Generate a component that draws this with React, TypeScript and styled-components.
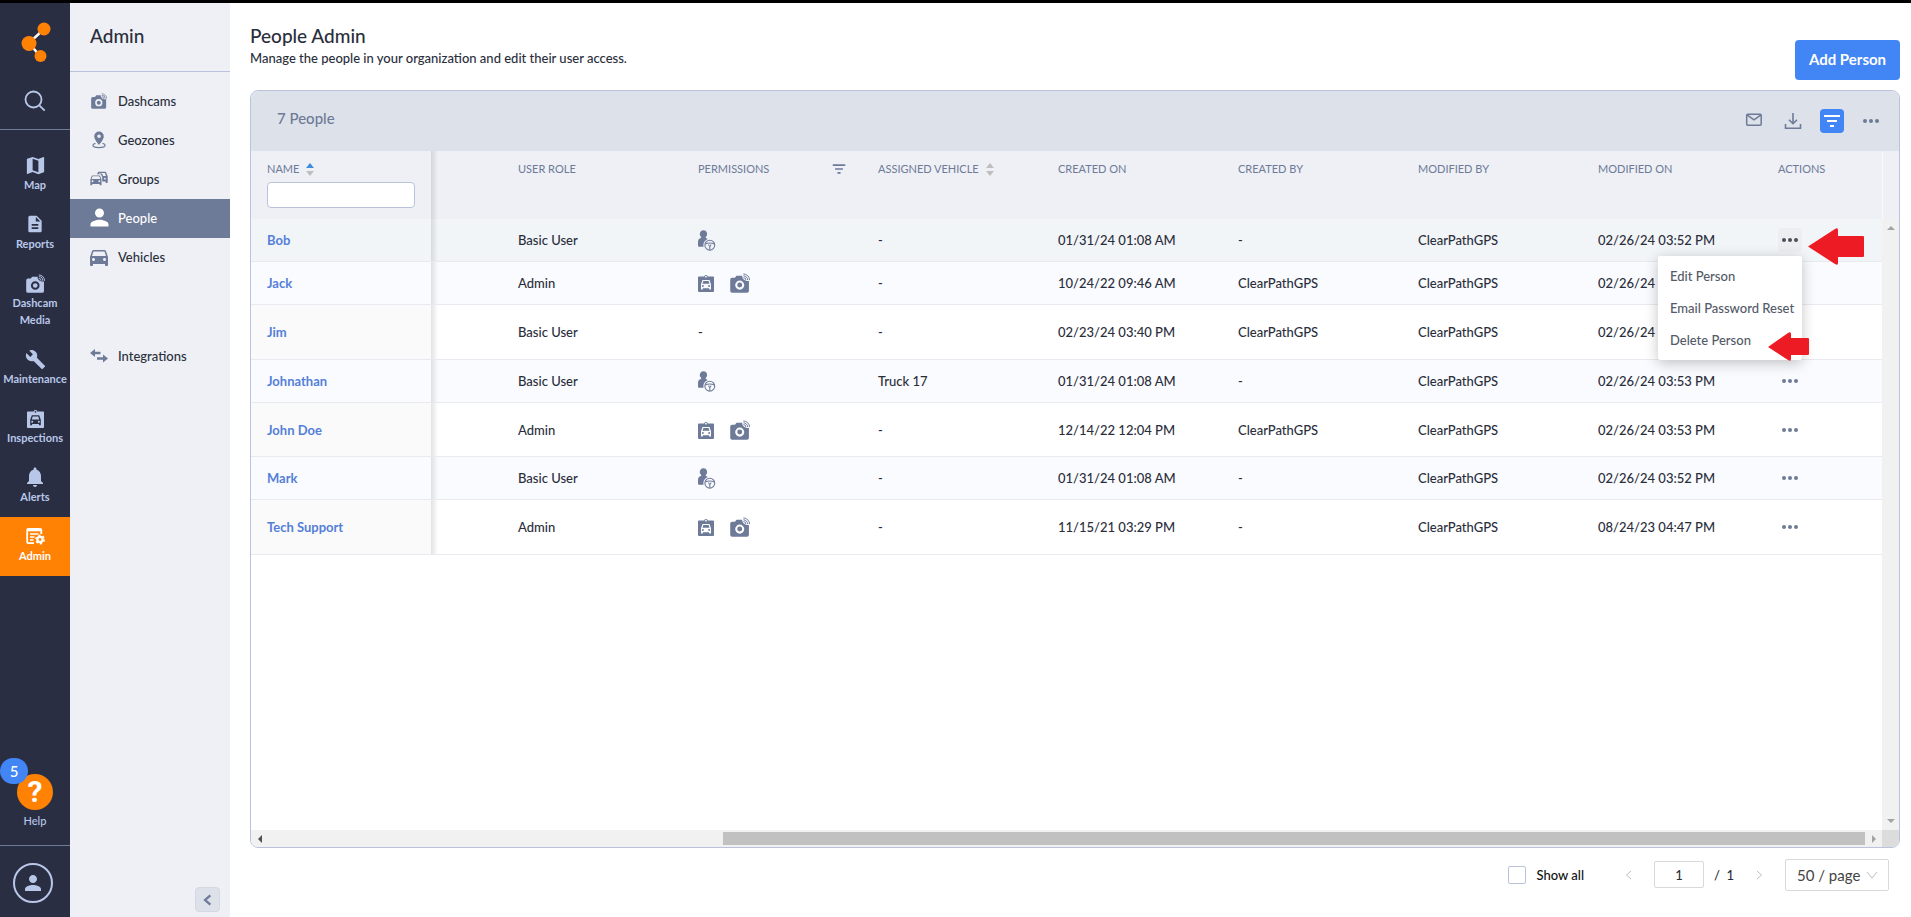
import React, { useState } from "react";
import styled, { createGlobalStyle } from "styled-components";
import {
  MdMap,
  MdDescription,
  MdBuild,
  MdNotifications,
  MdPerson,
  MdDirectionsCar,
} from "react-icons/md";

const c = {
  navy: "#2a2e43",
  nav: "#b8c7e8",
  slate: "#6d7a98",
  ink: "#2a2e3b",
  pale: "#eef0f5",
  band: "#dde1e9",
  line: "#b9c4dc",
  blue: "#4285f4",
  link: "#5580d8",
  orange: "#ff8205",
  rowLine: "#e8eaf0",
};

const GlobalStyle = createGlobalStyle`
  *, *::before, *::after { box-sizing: border-box; }
  body { margin: 0; background: #fff; color: ${c.ink}; font: 500 13px/20px Lato, "Open Sans", sans-serif; }
  button, input, select { font: inherit; color: inherit; }
  button { border: 0; padding: 0; background: none; cursor: pointer; }
  a { color: inherit; text-decoration: none; }
  h1, h2, p, ul { margin: 0; padding: 0; }
  ul { list-style: none; }
  svg { display: block; flex: none; }
`;

/* ---------- icons ---------- */

type IconProps = { size?: number };

const DashcamIcon = ({ size = 19 }: IconProps) => (
  <svg width={size} height={size} viewBox="1 0 18.500 18.500" fill="currentColor" aria-hidden="true">
    <path
      fillRule="evenodd"
      d="M3 4.500h2.600L7 2.600h5.200c.1 2.600 1.800 4.400 4.300 4.700h2V16.500a1.800 1.800 0 0 1-1.800 1.800H3a1.800 1.800 0 0 1-1.800-1.800V6.300A1.800 1.800 0 0 1 3 4.500zM10 7a4.200 4.200 0 1 0 0 8.400A4.200 4.200 0 0 0 10 7z"
    />
    <circle cx="10" cy="11.200" r="2.300" />
    <path d="M13.400 4.300a2.200 2.200 0 0 1 2.300 2.300M13.400 2.600a4 4 0 0 1 4 4M13.400 .9a5.700 5.700 0 0 1 5.700 5.700" fill="none" stroke="currentColor" strokeWidth="0.900" />
  </svg>
);

const GeozoneIcon = () => (
  <svg width="18" height="18" viewBox="0 0 18 18" fill="currentColor" aria-hidden="true">
    <path fillRule="evenodd" d="M9 .5a4.800 4.800 0 0 0-4.800 4.800C4.200 8.800 9 14 9 14s4.800-5.200 4.800-8.700A4.800 4.800 0 0 0 9 .5zm0 3a1.800 1.800 0 1 1 0 3.600 1.800 1.800 0 0 1 0-3.600z" />
    <path d="M5.500 12.400c-1.600.4-2.600 1-2.600 1.900 0 1.400 2.700 2.300 6.100 2.300s6.100-.9 6.100-2.300c0-.9-1-1.500-2.600-1.900" fill="none" stroke="currentColor" strokeWidth="1.200" />
  </svg>
);

const carPath =
  "M18.920 6.010C18.720 5.420 18.160 5 17.500 5h-11c-.66 0-1.210.42-1.420 1.010L3 12v8c0 .55.45 1 1 1h1c.55 0 1-.45 1-1v-1h12v1c0 .55.45 1 1 1h1c.55 0 1-.45 1-1v-8l-2.080-5.990zM6.500 16c-.83 0-1.500-.67-1.500-1.500S5.670 13 6.500 13s1.500.67 1.500 1.500S7.330 16 6.500 16zm11 0c-.83 0-1.500-.67-1.500-1.500s.67-1.500 1.500-1.500 1.500.67 1.500 1.500-.67 1.500-1.500 1.500zM5 11l1.500-4.500h11L19 11H5z";

const GroupsIcon = () => (
  <svg width="18" height="18" viewBox="0 0 18 18" fill="currentColor" aria-hidden="true">
    <g transform="translate(-1.500 2.300) scale(.62)">
      <path d={carPath} />
    </g>
    <path
      fillRule="evenodd"
      d="M7 4.200 7.900 2.200q.2-.5.8-.5h6.600q.6 0 .8.500l1.600 4v6.100q0 .6-.6.600h-1q-.5 0-.5-.600v-.9h-3.400V6.900l-1.300-2.700zM9 3 8.700 3.500h2.700q.7 0 1 .7l.7 1.900h2.900L14.900 3zM14.900 7.800a.9.9 0 1 0 0 1.800.9.9 0 0 0 0-1.800z"
    />
  </svg>
);

const InspectionIcon = ({ size = 17 }: IconProps) => (
  <svg width={size} height={size + 2} viewBox="1.500 0 17 19" fill="currentColor" aria-hidden="true">
    <path
      fillRule="evenodd"
      d="M2.500 2.500h5.600a2 2 0 0 1 3.800 0h5.600c.6 0 1 .4 1 1v14.500c0 .6-.4 1-1 1h-15c-.6 0-1-.4-1-1V3.500c0-.6.400-1 1-1zM10 1.900a.9.9 0 1 0 0 1.800.9.9 0 0 0 0-1.800zM6.300 6.200 4.700 10.800v5.500h1.900v-1.300h6.800v1.300h1.900v-5.500l-1.600-4.600zM7.200 7.500h5.600l.9 2.900H6.300zM6.700 11.700a1 1 0 1 1 0 2 1 1 0 0 1 0-2zm6.600 0a1 1 0 1 1 0 2 1 1 0 0 1 0-2z"
    />
  </svg>
);

const AdminIcon = () => (
  <svg width="20" height="20" viewBox="0 0 20 20" fill="none" stroke="currentColor" aria-hidden="true">
    <path d="M9 17.200H3.400a1.200 1.200 0 0 1-1.200-1.200V4a1.200 1.200 0 0 1 1.200-1.200h11.700A1.200 1.200 0 0 1 16.300 4v4" strokeWidth="1.800" />
    <path d="M2 4h14.500" strokeWidth="2.600" />
    <path d="M5 8h8.500M5 11h4.500M5 14h3.500" strokeWidth="1.500" />
    <circle cx="15" cy="13.500" r="2.600" strokeWidth="2.300" />
    <circle cx="15" cy="13.500" r="4.200" strokeWidth="1.500" strokeDasharray="2.200 2.200" />
  </svg>
);

const IntegrationsIcon = () => (
  <svg width="18" height="18" viewBox="0 0 18 18" fill="currentColor" aria-hidden="true">
    <path d="M0 6 5 2v2.700h5.500v2.600H5V10zM18 11.500l-5 4v-2.700H7v-2.600h6V7.500z" />
  </svg>
);

const DriverIcon = () => (
  <svg width="18" height="21" viewBox="0 0 18 21" fill="currentColor" aria-hidden="true">
    <path d="M5.500.3a3.600 3.700 0 0 1 2.300 6.600c-.2.400-.2.700.1 1 .7.200 1.300.500 1.900 1-2.600.9-4.200 3-4.400 5.700 0 .7 0 1.400.2 2.100H1.500C.6 16.700 0 16.200 0 15.200v-3.200c0-2.300 1-3.700 3-4.100.4-.3.400-.6.100-1A3.600 3.700 0 0 1 5.500.3z" />
    <g fill="none" stroke="currentColor" strokeWidth="1.100">
      <circle cx="11.800" cy="15.200" r="4.900" />
      <path d="M7.200 14q4.600-2 9.200 0M10.700 14.500q.1 1.800 1.100 1.800t1.100-1.800M11.800 16.300v3.500" />
    </g>
  </svg>
);

const SearchIcon = () => (
  <svg width="24" height="24" viewBox="0 0 24 24" fill="none" stroke="currentColor" strokeWidth="1.800" aria-hidden="true">
    <circle cx="10.500" cy="10.500" r="8" />
    <path d="m16.300 16.300 5.400 5.400" />
  </svg>
);

const LogoIcon = () => (
  <svg width="32" height="42" viewBox="0 0 32 42" aria-label="ClearPathGPS">
    <path d="M25 8 10 22l11 13" fill="none" stroke="#fff" strokeWidth="2.500" />
    <g fill={c.orange}>
      <circle cx="25" cy="8" r="6.500" />
      <circle cx="10" cy="22.500" r="7.500" />
      <circle cx="21.500" cy="35" r="6" />
    </g>
  </svg>
);

const DotsIcon = () => (
  <svg width="18" height="6" viewBox="0 0 18 6" fill="currentColor" aria-hidden="true">
    <circle cx="3" cy="3" r="2" />
    <circle cx="9" cy="3" r="2" />
    <circle cx="15" cy="3" r="2" />
  </svg>
);

const FilterIcon = ({ size = 12 }: IconProps) => (
  <svg width={size} height={size} viewBox="0 0 18 18" fill="none" stroke="currentColor" strokeWidth="2" aria-hidden="true">
    <path d="M1 4h16M4 9h10M7 14h4" />
  </svg>
);

const MailIcon = () => (
  <svg width="18" height="18" viewBox="0 0 18 18" fill="none" stroke="currentColor" strokeWidth="1.500" aria-hidden="true">
    <rect x="1.700" y="2.200" width="14.500" height="11" rx="1" />
    <path d="m2 2.800 7 5 7-5" />
  </svg>
);

const DownloadIcon = () => (
  <svg width="18" height="18" viewBox="0 0 18 18" fill="none" stroke="currentColor" strokeWidth="1.600" aria-hidden="true">
    <path d="M9 1v10.500M5 7.700l4 4 4-4M1.500 12v4.200h15V12" />
  </svg>
);

const Chevron = ({ dir, size = 12, weight = 1 }: { dir: "left" | "right" | "down"; size?: number; weight?: number }) => (
  <svg width={size} height={size} viewBox="0 0 12 12" fill="none" stroke="currentColor" strokeWidth={weight} aria-hidden="true">
    <path d={{ left: "M8 2 3.500 6 8 10", right: "M4 2l4.500 4L4 10", down: "M1 3l5 6 5-6" }[dir]} />
  </svg>
);

const SortIcon = ({ active }: { active?: boolean }) => (
  <svg width="10" height="14" viewBox="0 0 10 14" aria-hidden="true">
    <path d="M5 1 9 6H1z" fill={active ? "#3b8edb" : "#bfbfbf"} />
    <path d="M5 14 1 9h8z" fill="#bfbfbf" />
  </svg>
);

/* ---------- page frame ---------- */

const Page = styled.div`
  display: flex;
  min-height: 100vh;
  border-top: 3px solid #000;
`;

const Rail = styled.nav`
  display: flex;
  flex-direction: column;
  flex: none;
  width: 70px;
  background: ${c.navy};
  color: ${c.nav};
`;

const RailTop = styled.div`
  display: flex;
  flex-direction: column;
  align-items: center;
  gap: 26px;
  height: 127px;
  padding-top: 18px;
  border-bottom: 1px solid ${c.slate};
`;

const IconButton = styled.button<{ $active?: boolean }>`
  display: grid;
  place-items: center;
  width: 24px;
  height: 24px;
  border-radius: 4px;
  background: ${(p) => (p.$active ? c.blue : "transparent")};
  color: ${(p) => (p.$active ? "#fff" : "inherit")};
`;

const RailList = styled.ul`
  padding-top: 16px;
`;

const RailLink = styled.a<{ $active?: boolean }>`
  display: flex;
  flex-direction: column;
  align-items: center;
  gap: 1px;
  padding: 9px 0 12px;
  background: ${(p) => (p.$active ? c.orange : "transparent")};
  color: ${(p) => (p.$active ? "#fff" : "inherit")};
  font-weight: 700;
  font-size: 11px;
  line-height: 17px;
  text-align: center;
`;

const IconSlot = styled.span`
  display: flex;
  align-items: center;
  justify-content: center;
  width: 20px;
  height: 20px;
`;

const RailBottom = styled.div`
  margin-top: auto;
`;

const HelpButton = styled.button`
  position: relative;
  display: flex;
  flex-direction: column;
  align-items: center;
  gap: 2px;
  width: 100%;
  padding-bottom: 15px;
  font-size: 11px;
  line-height: 18px;
`;

const HelpMark = styled.span`
  display: grid;
  place-items: center;
  width: 36px;
  height: 36px;
  border-radius: 50%;
  background: ${c.orange};
  color: #fff;
  font: 700 30px/36px Roboto, sans-serif;
`;

const HelpBadge = styled.span`
  position: absolute;
  top: -16px;
  left: 0;
  width: 28px;
  height: 26px;
  border-radius: 13px;
  background: ${c.blue};
  color: #fff;
  font-size: 15px;
  line-height: 26px;
`;

const Account = styled.div`
  padding: 17px 13px 14px;
  border-top: 1px solid ${c.slate};
`;

const Avatar = styled.button`
  display: grid;
  place-items: center;
  width: 40px;
  height: 40px;
  border: 2px solid ${c.nav};
  border-radius: 50%;
`;

const Side = styled.aside`
  display: flex;
  flex-direction: column;
  flex: none;
  width: 160px;
  background: ${c.pale};
`;

const SideTitle = styled.h2`
  height: 69px;
  margin-bottom: 10px;
  padding: 21px 20px 0;
  border-bottom: 1px solid ${c.line};
  font-size: 19px;
  font-weight: 500;
  line-height: 24px;
`;

const SideLink = styled.a<{ $active?: boolean }>`
  display: flex;
  align-items: center;
  gap: 9px;
  height: 39px;
  padding: 0 19px 2px;
  background: ${(p) => (p.$active ? c.slate : "transparent")};
  color: ${(p) => (p.$active ? "#fff" : c.ink)};
`;

const SideIcon = styled(IconSlot)<{ $active?: boolean }>`
  color: ${(p) => (p.$active ? "#fff" : c.slate)};
`;

const SideGap = styled.li`
  height: 60px;
`;

const Collapse = styled.button`
  display: grid;
  place-items: center;
  width: 25px;
  height: 25px;
  margin: auto 10px 5px auto;
  border: 1px solid #d3d8e2;
  border-radius: 4px;
  background: ${c.band};
  color: ${c.slate};
`;

const Main = styled.main`
  display: flex;
  flex-direction: column;
  flex: 1;
  min-width: 0;
  padding: 0 11px 0 20px;
`;

const Heading = styled.header`
  display: flex;
  justify-content: space-between;
  min-height: 87px;
  padding: 21px 0 10px;
`;

const Title = styled.h1`
  font-size: 19px;
  font-weight: 500;
  line-height: 24px;
`;

const AddButton = styled.button`
  align-self: flex-end;
  width: 105px;
  height: 40px;
  padding-bottom: 2px;
  border-radius: 4px;
  background: ${c.blue};
  color: #fff;
  font-size: 15px;
  font-weight: 700;
`;

/* ---------- table card ---------- */

const Card = styled.section`
  display: flex;
  flex-direction: column;
  flex: 1;
  border: 1px solid ${c.line};
  border-radius: 8px;
  overflow: hidden;
`;

const CardBar = styled.div`
  display: flex;
  align-items: center;
  justify-content: space-between;
  height: 60px;
  padding: 0 16px 0 26px;
  background: ${c.band};
  color: ${c.slate};
`;

const Count = styled.h2`
  padding-bottom: 6px;
  font-size: 15px;
  font-weight: 500;
`;

const Tools = styled.div`
  display: flex;
  gap: 15px;
`;

const Viewport = styled.div`
  display: flex;
  flex: 1;
`;

const TableArea = styled.div`
  flex: 1;
  min-width: 0;
`;

const Table = styled.table`
  width: 100%;
  table-layout: fixed;
  border-collapse: separate;
  border-spacing: 0;
`;

const Col = styled.col<{ $w?: number }>`
  width: ${(p) => (p.$w ? p.$w + "px" : "auto")};
`;

const Th = styled.th`
  height: 68px;
  padding: 8px 16px 0;
  background: ${c.pale};
  color: ${c.slate};
  font-size: 11px;
  font-weight: 400;
  text-align: left;
  vertical-align: top;
  white-space: nowrap;
`;

const HeadLabel = styled.div<{ $spread?: boolean }>`
  display: flex;
  align-items: center;
  justify-content: ${(p) => (p.$spread ? "space-between" : "flex-start")};
  gap: 6px;
`;

const NameFilter = styled.input`
  display: block;
  width: 100%;
  height: 26px;
  margin-top: 3px;
  padding: 0 8px;
  border: 1px solid ${c.line};
  border-radius: 4px;
  background: #fff;
`;

const Tr = styled.tr<{ $tone: "hover" | "tint" | "plain"; $h: number }>`
  height: ${(p) => p.$h}px;
  background: ${(p) => ({ hover: "#f2f5f8", tint: "#fafbfe", plain: "#fff" })[p.$tone]};
`;

const Td = styled.td`
  padding: 0 16px;
  border-bottom: 1px solid ${c.rowLine};
  white-space: nowrap;
`;

const NameCell = styled.th<{ $plain: boolean }>`
  padding: 0 16px;
  border-bottom: 1px solid ${c.rowLine};
  background: ${(p) => (p.$plain ? "#fafafa" : "transparent")};
  color: ${c.link};
  font-weight: 700;
  text-align: left;
`;

const ShadeTd = styled.td<{ $head?: boolean }>`
  padding: 0;
  border-bottom: ${(p) => (p.$head ? "0" : `1px solid ${c.rowLine}`)};
  background: linear-gradient(to right, rgba(0, 0, 0, 0.11), rgba(0, 0, 0, 0) 7px)
    ${(p) => (p.$head ? c.pale : "transparent")};
`;

const Permissions = styled.div`
  display: flex;
  align-items: center;
  gap: 16px;
  color: ${c.slate};
`;

const ActionWrap = styled.div`
  position: relative;
  width: 24px;
`;

const RowButton = styled(IconButton)`
  color: ${(p) => (p.$active ? "#4a4f5c" : c.slate)};
  background: ${(p) => (p.$active ? "#eceef1" : "transparent")};
`;

const Menu = styled.div`
  position: absolute;
  z-index: 2;
  top: 28px;
  right: 0;
  width: 144px;
  padding: 4px 0;
  border-radius: 2px;
  background: #fff;
  box-shadow: 0 3px 14px rgba(0, 0, 0, 0.24);
`;

const MenuItem = styled.button`
  display: block;
  width: 100%;
  height: 32px;
  padding: 0 12px;
  color: #545a68;
  text-align: left;
  white-space: nowrap;
`;

const Pointer = styled.svg<{ $top: number; $left: number }>`
  position: absolute;
  z-index: 3;
  top: ${(p) => p.$top}px;
  left: ${(p) => p.$left}px;
`;

/* ---------- scroll bars ---------- */

const VTrack = styled.div`
  display: flex;
  flex-direction: column;
  flex: none;
  width: 17px;
  background: #f1f1f1;
`;

const VHead = styled.div`
  height: 68px;
  background: ${c.pale};
  border-left: 1px solid #f8f9fb;
`;

const VBody = styled.div`
  display: flex;
  flex: 1;
  flex-direction: column;
  align-items: center;
  justify-content: space-between;
  padding: 5px 0;
`;

const HTrack = styled.div`
  display: flex;
  align-items: center;
  height: 17px;
  background: #f1f1f1;
`;

const HLane = styled.div`
  display: flex;
  justify-content: flex-end;
  flex: 1;
`;

const HThumb = styled.div`
  width: calc(72% - 8px);
  height: 13px;
  background: #c1c1c1;
`;

const HCap = styled.div`
  display: grid;
  place-items: center;
  width: 17px;
`;

const Corner = styled.div`
  width: 17px;
  height: 17px;
  background: #dcdcdc;
`;

const Arrow = ({ d, fill = "#a3a3a3" }: { d: string; fill?: string }) => (
  <svg width="8" height="8" viewBox="0 0 8 8" fill={fill} aria-hidden="true">
    <path d={d} />
  </svg>
);

/* ---------- pager ---------- */

const Pager = styled.footer`
  display: flex;
  align-items: center;
  justify-content: flex-end;
  height: 69px;
  padding: 0 11px 16px 0;
`;

const ShowAll = styled.label`
  display: flex;
  align-items: center;
  gap: 10px;
  margin-right: 39px;
  color: #111;
`;

const Check = styled.input`
  appearance: none;
  width: 18px;
  height: 18px;
  margin: 0;
  border: 1px solid ${c.line};
  border-radius: 2px;
  background: #fff;
`;

const PageStep = styled.button`
  display: grid;
  place-items: center;
  width: 12px;
  height: 24px;
  color: #bfbfbf;
`;

const PageInput = styled.input`
  width: 50px;
  height: 27px;
  margin: 0 10px 0 19px;
  padding: 0;
  border: 1px solid #d9d9d9;
  border-radius: 2px;
  text-align: center;
`;

const PageTotal = styled.span`
  width: 39px;
  white-space: pre;
`;

const SizeBox = styled.div`
  display: grid;
  align-items: center;
  width: 104px;
  height: 32px;
  margin-left: 20px;
  border: 1px solid #d9d9d9;
  border-radius: 2px;
  color: #bfbfbf;

  select,
  svg {
    grid-area: 1 / 1;
  }

  svg {
    justify-self: end;
    margin-right: 10px;
    pointer-events: none;
  }
`;

const SizeSelect = styled.select`
  appearance: none;
  width: 100%;
  height: 100%;
  padding: 0 11px;
  border: 0;
  background: transparent;
  color: #444;
  font-size: 15px;
  font-weight: 400;
`;

/* ---------- data ---------- */

const railItems = [
  { label: "Map", icon: <MdMap size={23} /> },
  { label: "Reports", icon: <MdDescription size={20} /> },
  { label: "Dashcam Media", icon: <DashcamIcon /> },
  { label: "Maintenance", icon: <MdBuild size={21} /> },
  { label: "Inspections", icon: <InspectionIcon /> },
  { label: "Alerts", icon: <MdNotifications size={24} /> },
  { label: "Admin", icon: <AdminIcon />, active: true },
];

const sideItems = [
  { label: "Dashcams", icon: <DashcamIcon size={16} /> },
  { label: "Geozones", icon: <GeozoneIcon /> },
  { label: "Groups", icon: <GroupsIcon /> },
  { label: "People", icon: <MdPerson size={27} />, active: true },
  { label: "Vehicles", icon: <MdDirectionsCar size={24} /> },
];

type Person = {
  name: string;
  role: string;
  perms: "driver" | "full" | "none";
  vehicle: string;
  createdOn: string;
  createdBy: string;
  modifiedOn: string;
  h: number;
};

const CPG = "ClearPathGPS";

const people: Person[] = [
  { name: "Bob", role: "Basic User", perms: "driver", vehicle: "-", createdOn: "01/31/24 01:08 AM", createdBy: "-", modifiedOn: "02/26/24 03:52 PM", h: 43 },
  { name: "Jack", role: "Admin", perms: "full", vehicle: "-", createdOn: "10/24/22 09:46 AM", createdBy: CPG, modifiedOn: "02/26/24 03:52 PM", h: 43 },
  { name: "Jim", role: "Basic User", perms: "none", vehicle: "-", createdOn: "02/23/24 03:40 PM", createdBy: CPG, modifiedOn: "02/26/24 03:52 PM", h: 55 },
  { name: "Johnathan", role: "Basic User", perms: "driver", vehicle: "Truck 17", createdOn: "01/31/24 01:08 AM", createdBy: "-", modifiedOn: "02/26/24 03:53 PM", h: 43 },
  { name: "John Doe", role: "Admin", perms: "full", vehicle: "-", createdOn: "12/14/22 12:04 PM", createdBy: CPG, modifiedOn: "02/26/24 03:53 PM", h: 54 },
  { name: "Mark", role: "Basic User", perms: "driver", vehicle: "-", createdOn: "01/31/24 01:08 AM", createdBy: "-", modifiedOn: "02/26/24 03:52 PM", h: 43 },
  { name: "Tech Support", role: "Admin", perms: "full", vehicle: "-", createdOn: "11/15/21 03:29 PM", createdBy: "-", modifiedOn: "08/24/23 04:47 PM", h: 55 },
];

const PermissionIcons = ({ kind }: { kind: Person["perms"] }) => {
  if (kind === "none") return <>-</>;
  return (
    <Permissions>
      {kind === "driver" ? (
        <DriverIcon />
      ) : (
        <>
          <InspectionIcon size={16} />
          <DashcamIcon size={20} />
        </>
      )}
    </Permissions>
  );
};

const RowMenu = () => (
  <>
    <Menu role="menu">
      <MenuItem role="menuitem">Edit Person</MenuItem>
      <MenuItem role="menuitem">Email Password Reset</MenuItem>
      <MenuItem role="menuitem">Delete Person</MenuItem>
    </Menu>
    <Pointer $top={0} $left={30} width="57" height="38" viewBox="0 0 57 38" fill="#ed1c24" aria-hidden="true">
      <path d="M0 18.500 27 1Q30-1 30 2v6h25q1 0 1 1v19q0 1-1 1H30v6q0 3-3 1z" />
    </Pointer>
    <Pointer $top={104} $left={-10} width="42" height="30" viewBox="0 0 42 30" fill="#ed1c24" aria-hidden="true">
      <path d="M0 15 20 1q3-2 3 1v4h17q1 0 1 1v15q0 1-1 1H23v4q0 3-3 1z" />
    </Pointer>
  </>
);

export default function App() {
  const [filter, setFilter] = useState("");
  const [openRow, setOpenRow] = useState("Bob");
  const [page, setPage] = useState("1");
  const shown = people.filter((p) => p.name.toLowerCase().includes(filter.toLowerCase()));

  return (
    <>
      <GlobalStyle />
      <Page>
        <Rail aria-label="Main">
          <RailTop>
            <LogoIcon />
            <IconButton aria-label="Search">
              <SearchIcon />
            </IconButton>
          </RailTop>
          <RailList>
            {railItems.map((item) => (
              <li key={item.label}>
                <RailLink href="#" $active={item.active}>
                  <IconSlot>{item.icon}</IconSlot>
                  {item.label}
                </RailLink>
              </li>
            ))}
          </RailList>
          <RailBottom>
            <HelpButton>
              <HelpMark>?</HelpMark>
              <HelpBadge>5</HelpBadge>
              Help
            </HelpButton>
            <Account>
              <Avatar aria-label="Account">
                <MdPerson size={24} />
              </Avatar>
            </Account>
          </RailBottom>
        </Rail>

        <Side>
          <SideTitle>Admin</SideTitle>
          <ul>
            {sideItems.map((item) => (
              <li key={item.label}>
                <SideLink href="#" $active={item.active}>
                  <SideIcon $active={item.active}>{item.icon}</SideIcon>
                  {item.label}
                </SideLink>
              </li>
            ))}
            <SideGap aria-hidden="true" />
            <li>
              <SideLink href="#">
                <SideIcon>
                  <IntegrationsIcon />
                </SideIcon>
                Integrations
              </SideLink>
            </li>
          </ul>
          <Collapse aria-label="Collapse menu">
            <Chevron dir="left" size={14} weight={2} />
          </Collapse>
        </Side>

        <Main>
          <Heading>
            <div>
              <Title>People Admin</Title>
              <p>Manage the people in your organization and edit their user access.</p>
            </div>
            <AddButton>Add Person</AddButton>
          </Heading>

          <Card>
            <CardBar>
              <Count>7 People</Count>
              <Tools>
                <IconButton aria-label="Email">
                  <MailIcon />
                </IconButton>
                <IconButton aria-label="Download">
                  <DownloadIcon />
                </IconButton>
                <IconButton aria-label="Filter" $active>
                  <FilterIcon size={18} />
                </IconButton>
                <IconButton aria-label="More">
                  <DotsIcon />
                </IconButton>
              </Tools>
            </CardBar>

            <Viewport>
              <TableArea>
                <Table>
                  <colgroup>
                    <Col $w={180} />
                    <Col $w={71} />
                    {[1, 2, 3, 4, 5, 6, 7].map((n) => (
                      <Col key={n} $w={180} />
                    ))}
                    <Col />
                  </colgroup>
                  <thead>
                    <tr>
                      <Th scope="col">
                        <HeadLabel>
                          NAME <SortIcon active />
                        </HeadLabel>
                        <NameFilter aria-label="Filter by name" value={filter} onChange={(e) => setFilter(e.target.value)} />
                      </Th>
                      <ShadeTd $head />
                      <Th scope="col">USER ROLE</Th>
                      <Th scope="col">
                        <HeadLabel $spread>
                          PERMISSIONS <FilterIcon size={14} />
                        </HeadLabel>
                      </Th>
                      <Th scope="col">
                        <HeadLabel>
                          ASSIGNED VEHICLE <SortIcon />
                        </HeadLabel>
                      </Th>
                      <Th scope="col">CREATED ON</Th>
                      <Th scope="col">CREATED BY</Th>
                      <Th scope="col">MODIFIED BY</Th>
                      <Th scope="col">MODIFIED ON</Th>
                      <Th scope="col">ACTIONS</Th>
                    </tr>
                  </thead>
                  <tbody>
                    {shown.map((p) => {
                      const tone = p.name === "Bob" ? "hover" : p.h === 43 ? "tint" : "plain";
                      return (
                        <Tr key={p.name} $tone={tone} $h={p.h}>
                          <NameCell scope="row" $plain={tone === "plain"}>
                            <a href="#">{p.name}</a>
                          </NameCell>
                          <ShadeTd />
                          <Td>{p.role}</Td>
                          <Td>
                            <PermissionIcons kind={p.perms} />
                          </Td>
                          <Td>{p.vehicle}</Td>
                          <Td>{p.createdOn}</Td>
                          <Td>{p.createdBy}</Td>
                          <Td>{CPG}</Td>
                          <Td>{p.modifiedOn}</Td>
                          <Td>
                            <ActionWrap>
                              <RowButton
                                aria-label={`Actions for ${p.name}`}
                                $active={openRow === p.name}
                                onClick={() => setOpenRow(openRow === p.name ? "" : p.name)}
                              >
                                <DotsIcon />
                              </RowButton>
                              {openRow === p.name && <RowMenu />}
                            </ActionWrap>
                          </Td>
                        </Tr>
                      );
                    })}
                  </tbody>
                </Table>
              </TableArea>
              <VTrack>
                <VHead />
                <VBody>
                  <Arrow d="M4 2 8 6H0z" />
                  <Arrow d="M4 6 0 2h8z" />
                </VBody>
              </VTrack>
            </Viewport>
            <HTrack>
              <HCap>
                <Arrow d="M2 4 6 0v8z" fill="#505050" />
              </HCap>
              <HLane>
                <HThumb />
              </HLane>
              <HCap>
                <Arrow d="M6 4 2 0v8z" />
              </HCap>
              <Corner />
            </HTrack>
          </Card>

          <Pager>
            <ShowAll>
              <Check type="checkbox" />
              Show all
            </ShowAll>
            <PageStep aria-label="Previous page">
              <Chevron dir="left" />
            </PageStep>
            <PageInput aria-label="Page" value={page} onChange={(e) => setPage(e.target.value)} />
            <PageTotal>{"/  1"}</PageTotal>
            <PageStep aria-label="Next page">
              <Chevron dir="right" />
            </PageStep>
            <SizeBox>
              <SizeSelect aria-label="Rows per page" defaultValue="50">
                <option value="50">50 / page</option>
                <option value="100">100 / page</option>
              </SizeSelect>
              <Chevron dir="down" />
            </SizeBox>
          </Pager>
        </Main>
      </Page>
    </>
  );
}
